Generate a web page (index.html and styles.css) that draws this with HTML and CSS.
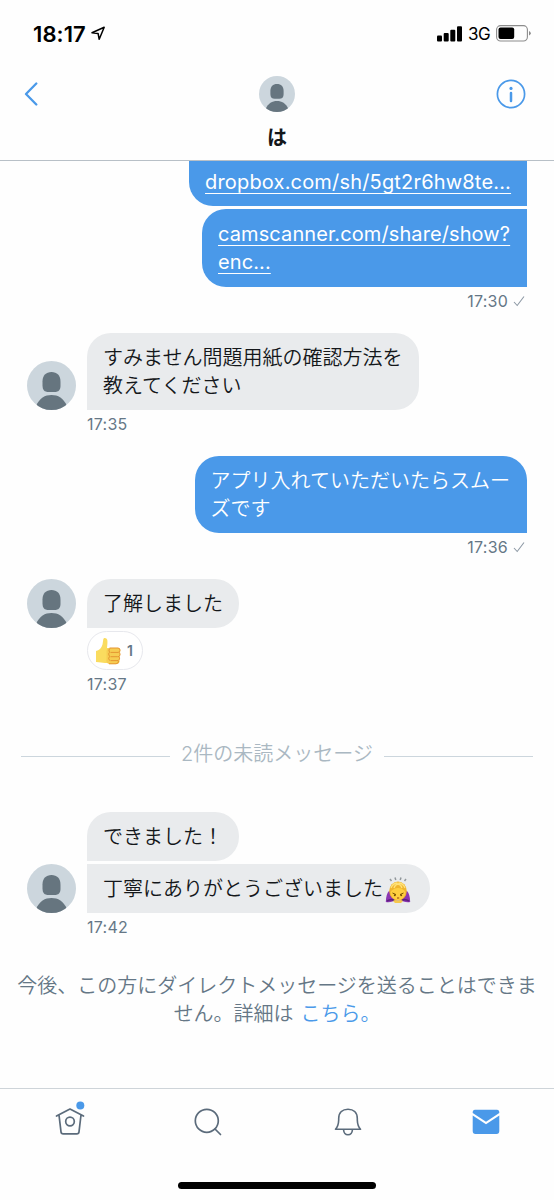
FILE: index.html
```
<!DOCTYPE html>
<html lang="ja">
<head>
<meta charset="utf-8">
<title>は</title>
<link rel="stylesheet" href="styles.css">
</head>
<body>
<svg class="defs" width="0" height="0" aria-hidden="true">
  <symbol id="avatar" viewBox="0 0 49 49">
    <clipPath id="round"><circle cx="24.5" cy="24.5" r="24.5"/></clipPath>
    <g clip-path="url(#round)">
      <rect width="49" height="49" fill="#ccd6dd"/>
      <path d="M24.500 11C30 11 33.500 14.500 33.500 20.500V24.500C33.500 29 31.500 31 27.500 31H21.500C17.500 31 15.500 29 15.500 24.500V20.500C15.500 14.500 19 11 24.500 11Z" fill="#66757f"/>
      <path d="M9 45C12.500 37 18 34 24.500 34S36.500 37 40 45L37 49H12Z" fill="#66757f"/>
    </g>
  </symbol>
  <symbol id="check" viewBox="0 0 12 12">
    <path d="M1 7L4.200 10.500L11 1.500" fill="none" stroke="#8d99a5" stroke-width="1.100"/>
  </symbol>
</svg>
<div class="screen">
  <div class="status">
    <span class="clock">18:17</span>
    <svg class="location" width="15" height="15" viewBox="0 0 15 15"><path d="M1 6.800L13.200 1.200L8.200 13.300L7.100 7.500Z" fill="none" stroke="#000" stroke-width="1.500" stroke-linejoin="round"/></svg>
    <svg class="signal" width="25" height="16" viewBox="0 0 25 16"><rect y="9.500" width="5" height="6" rx="1"/><rect x="6.700" y="7" width="5" height="8.500" rx="1"/><rect x="13.300" y="3.800" width="5" height="11.700" rx="1"/><rect x="20" y="0.300" width="5" height="15.200" rx="1"/></svg>
    <span class="network">3G</span>
    <svg class="battery" width="35" height="17" viewBox="0 0 35 17"><rect x="0.600" y="0.600" width="30.800" height="15.400" rx="4" fill="none" stroke="#8c8c8c" stroke-width="1.100"/><rect x="2.500" y="2.600" width="15.700" height="11.500" rx="2"/><path d="M33 6Q34.800 6.800 34.800 8.300T33 10.600Z" fill="#8c8c8c"/></svg>
  </div>
  <header class="header">
    <svg class="back" width="14" height="24" viewBox="0 0 14 24"><path d="M12.300 1.500L2 12L12.300 22.500" fill="none" stroke="#4a99e9" stroke-width="2.300" stroke-linecap="round" stroke-linejoin="round"/></svg>
    <div class="peer">
      <svg width="36" height="36"><use href="#avatar"/></svg>
      <h1 class="name">は</h1>
    </div>
    <svg class="info" width="30" height="30" viewBox="0 0 30 30"><circle cx="15" cy="15" r="13.600" fill="none" stroke="#4a99e9" stroke-width="1.700"/><circle cx="15" cy="9.400" r="1.600" fill="#4a99e9"/><path d="M15 14V22" stroke="#4a99e9" stroke-width="2.500" stroke-linecap="round"/></svg>
  </header>
  <main class="chat">
    <section class="sent">
      <div class="bubble continued"><a class="dropbox">dropbox.com/sh/5gt2r6hw8te...</a></div>
      <div class="bubble last"><a>camscanner.com/share/show?<br>enc...</a></div>
      <div class="meta">17:30 <svg width="12" height="12"><use href="#check"/></svg></div>
    </section>
    <section class="received">
      <div class="row"><svg class="avatar"><use href="#avatar"/></svg><div class="bubble">すみません問題用紙の確認方法を<br>教えてください</div></div>
      <div class="meta">17:35</div>
    </section>
    <section class="sent">
      <div class="bubble">アプリ入れていただいたらスムー<br>ズです</div>
      <div class="meta">17:36 <svg width="12" height="12"><use href="#check"/></svg></div>
    </section>
    <section class="received">
      <div class="row"><svg class="avatar"><use href="#avatar"/></svg><div class="bubble single">了解しました</div></div>
      <div class="reaction">
        <svg width="26" height="28" viewBox="0 0 26 28">
          <path d="M1 14C4 13.500 6.500 11 7.500 7.500L8.300 2.200C8.700 .2 11.800 .5 12.300 3C12.700 5.200 12.300 8 12 11H16V26H10C7 26 5 25 1 25Z" fill="#fadc5f"/>
          <path d="M14.500 11H23.500Q25.500 11.200 25.200 14L24.500 25Q24 27 21.500 27H14Q10.500 26 11.500 22V14Q12 11 14.500 11Z" fill="#f6cd52"/>
          <path d="M14.500 11H23Q25 11.100 25 13.200T23 15.400H15.500M24 15.500Q25.500 16 25 18T22.500 19.700H15.500M24 20Q25 21 24.400 22.300T22 23.600H15.500M23.500 24Q23.500 26.800 21 26.800H14M15 11.500Q13 12.500 14.500 15.200Q12.800 16.500 14.500 19.600Q12.800 21 14.500 23.500" fill="none" stroke="#e59632" stroke-width="1"/>
        </svg>
        <span>1</span>
      </div>
      <div class="meta">17:37</div>
    </section>
    <div class="unread"><span>2件の未読メッセージ</span></div>
    <section class="received">
      <div class="bubble short">できました！</div>
      <div class="row"><svg class="avatar"><use href="#avatar"/></svg><div class="bubble end">丁寧にありがとうございました<svg class="bow" width="26" height="28" viewBox="0 0 26 28">
        <path d="M5 3L6.500 5M10 1.500L10.800 4M16 1.500L15.200 4M21 3L19.500 5" stroke="#92989c" stroke-width="1.500"/>
        <path d="M4 15Q1 18 .8 26Q7 27 11 23L7 16ZM22 15Q25 18 25.200 26Q19 27 15 23L19 16Z" fill="#8b36b2"/>
        <path d="M2 25Q7 22 11 25.500H15Q19 22 24 25" fill="none" stroke="#5d217f" stroke-width="1.700"/>
        <ellipse cx="13" cy="15" rx="8.800" ry="9.500" fill="#f0b52f"/>
        <path d="M5.500 16Q7 14 9 13Q13 11 17 13Q19 14 20.500 16Q20 23 13 24Q6 23 5.500 16Z" fill="#ffcf3f"/>
        <path d="M6 12Q8 7 12.500 7M20 12Q18 7 13.500 7M9 12Q10 8.500 13 8Q16 8.500 17 12" fill="none" stroke="#ffe278" stroke-width="1.300"/>
        <path d="M7.500 17L11 18.600M18.500 17L15 18.600" fill="none" stroke="#795000" stroke-width="1"/>
        <circle cx="9.800" cy="19.300" r="1" fill="#795000"/><circle cx="16.200" cy="19.300" r="1" fill="#795000"/>
        <path d="M12 22H14.200" stroke="#a75519" stroke-width="1.200"/>
        <path d="M8 25Q10 23 13 25Q16 23 18 25L16 27H10Z" fill="#f6c84c"/>
      </svg></div></div>
      <div class="meta">17:42</div>
    </section>
    <p class="notice">今後、この方にダイレクトメッセージを送ることはできま<br>せん。詳細は<a>こちら。</a></p>
  </main>
  <nav class="tabs">
    <div class="tab"><svg class="home" width="30" height="36" viewBox="0 0 30 36" fill="none" stroke="#5b6b7b" stroke-width="1.700" stroke-linejoin="round" stroke-linecap="round"><path d="M1.500 15L15 8L28.500 15M4 14L6 30.800Q6.200 32.800 8.200 32.800H21.800Q23.800 32.800 24 30.800L26 14"/><circle cx="15" cy="20.500" r="4.300"/><circle cx="25.300" cy="4.500" r="4" fill="#4a99e9" stroke="none"/></svg></div>
    <div class="tab"><svg class="search" width="28" height="28" viewBox="0 0 28 28" fill="none" stroke="#5b6b7b" stroke-width="1.700" stroke-linecap="round"><circle cx="12.800" cy="12.800" r="11.500"/><path d="M21 21L26.500 26.500"/></svg></div>
    <div class="tab"><svg class="bell" width="28" height="28" viewBox="0 0 28 28" fill="none" stroke="#5b6b7b" stroke-width="1.600" stroke-linejoin="round"><path d="M1.500 21.300Q4.500 18 4.700 12V10.500C4.700 4.500 8.500 1.200 14 1.200S23.300 4.500 23.300 10.500V12Q23.500 18 26.500 21.300ZM9.500 21.500Q10 26.800 14 26.800T18.500 21.500"/></svg></div>
    <div class="tab"><svg class="mail" width="28" height="26" viewBox="0 0 28 26"><path d="M3 .8H25Q27.300 .8 27.300 3.500V4L14 12.800L.7 4V3.500Q.7 .8 3 .8ZM.7 6.500L14 15.300L27.300 6.500V22Q27.300 25 24.500 25H3.500Q.7 25 .7 22Z" fill="#4a99e9"/></svg></div>
  </nav>
  <div class="home-indicator"></div>
</div>
</body>
</html>
```
FILE: styles.css
```
* { box-sizing: border-box; }
body { margin: 0; background: #fefefe; color: #14171a; font-family: Inter, "Noto Sans CJK JP", sans-serif; }
svg { display: block; flex: none; }
.defs { position: absolute; }
.screen { display: flex; flex-direction: column; width: 554px; height: 1200px; overflow: hidden; }
.status { display: flex; align-items: center; height: 67px; padding: 0 24px 0 33px; color: #000; }
.clock { font-size: 22px; font-weight: 600; letter-spacing: .1px; width: 53px; }
.location { margin-left: 5px; }
.signal { margin-left: auto; }
.network { width: 22px; margin: 0 6px 0 6px; font-size: 17px; font-weight: 400; letter-spacing: -.4px; white-space: nowrap; }
.battery { margin-right: -1px; }
.header { display: flex; justify-content: space-between; height: 94px; padding: 9px 28px 0 24px; border-bottom: 1px solid #b8c0c7; }
.back { margin: 6px 16px 0 0; }
.peer { display: flex; flex-direction: column; align-items: center; width: 36px; margin-left: 4px; }
.name { margin: 11px 0 0; font-size: 20px; line-height: 30px; font-weight: 700; }
.info { margin-top: 3px; }
.chat { flex: 1; overflow: hidden; font-size: 20px; line-height: 28px; font-weight: 350; }
.sent { display: flex; flex-direction: column; align-items: flex-end; padding-right: 27px; margin-bottom: 20px; }
.received { display: flex; flex-direction: column; align-items: flex-start; padding-left: 87px; margin-bottom: 20px; }
.row { display: flex; align-items: flex-end; gap: 11px; margin-left: -60px; }
.avatar { width: 49px; height: 49px; }
.bubble { padding: 11px 17px 10px 16px; border-radius: 24px 24px 24px 0; background: #e9ebed; white-space: nowrap; }
.bubble.single, .bubble.short { padding-right: 16px; }
.sent .bubble { color: #fff; background: #4a99e9; border-radius: 24px 24px 0 24px; }
.sent .bubble.continued { width: 338px; height: 45px; padding-top: 7px; border-radius: 0 0 0 24px; margin-bottom: 3px; }
.sent .bubble.last { width: 325px; height: 78px; padding-top: 11px; border-radius: 24px 0 0 24px; }
.bubble a { font-weight: 400; letter-spacing: .1px; text-decoration: underline; text-decoration-thickness: 1.3px; text-underline-offset: 4px; }
.bubble .dropbox { letter-spacing: .18px; }
.bubble.short { margin-bottom: 3px; }
.bubble.end { border-radius: 0 24px 24px 0; padding-right: 19px; }
.meta { display: flex; align-items: center; gap: 5px; height: 26px; padding-top: 2px; font-size: 16px; line-height: 22px; font-weight: 400; letter-spacing: .25px; color: #657786; }
.sent .meta { padding-right: 2px; }
.reaction { display: flex; align-items: center; gap: 6px; width: 56px; height: 39px; margin-top: 3px; padding-left: 7px; border: 1px solid #e7e8ed; border-radius: 20px; background: #fff; color: #657786; font-size: 14px; font-weight: 600; }
.unread { display: flex; align-items: center; gap: 11px; height: 28px; margin: 44px 21px 44px; color: #aab8c2; }
.unread::before, .unread::after { content: ""; flex: 1; height: 1px; margin-top: 5px; background: #ccd6dd; }
.bow { display: inline-block; vertical-align: -7px; margin: -2px 0 -1px 2px; }
.notice { margin: 33px 0 0; text-align: center; color: #657786; }
.notice a { margin-left: 7px; color: #4a99e9; }
.tabs { display: flex; height: 94px; border-top: 1px solid #ced4d9; }
.tab { display: flex; justify-content: center; width: 139px; }
.home { margin: 12px 0 0 1px; }
.search { margin-top: 19px; }
.bell { margin: 19px 0 0 3px; }
.mail { margin: 20px 0 0 2px; }
.home-indicator { width: 198px; height: 7px; margin: 0 auto 11px; border-radius: 4px; background: #000; }
```
